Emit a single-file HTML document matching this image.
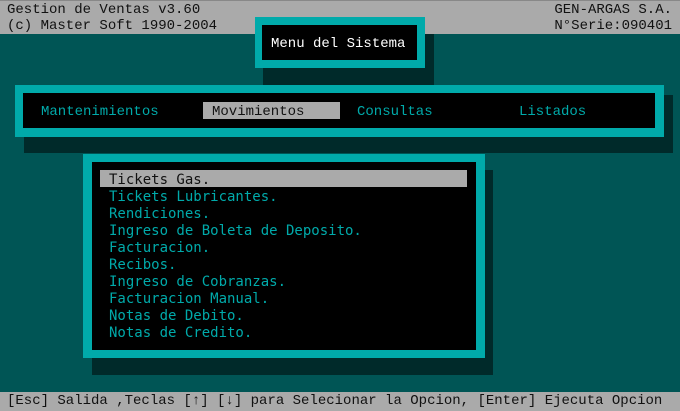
<!DOCTYPE html>
<html><head><style>
body{margin:0;width:680px;height:411px;background:#005555;position:relative;overflow:hidden;font-family:"Liberation Mono","DejaVu Sans Mono",monospace;font-size:14px;}
div{position:absolute;box-sizing:border-box;}
.t{white-space:pre;line-height:17px;}
</style></head><body>
<div style="left:0;top:0;width:680px;height:34px;background:#aaaaaa;border-top:1px solid #888;"></div>
<div class="t" style="left:7px;top:2px;color:#111;">Gestion de Ventas v3.60</div>
<div class="t" style="left:7px;top:18px;color:#111;">(c) Master Soft 1990-2004</div>
<div class="t" style="right:8px;top:2px;color:#111;">GEN-ARGAS S.A.</div>
<div class="t" style="right:8px;top:18px;color:#111;">N°Serie:090401</div>

<div style="left:263px;top:34px;width:171px;height:51px;background:#002a2a;"></div>
<div style="left:255px;top:17px;width:170px;height:51px;background:#00aaaa;"></div>
<div style="left:262px;top:25px;width:155px;height:35px;background:#000;"></div>
<div class="t" style="left:271px;top:36px;color:#fff;">Menu del Sistema</div>

<div style="left:24px;top:95px;width:649px;height:58px;background:#002a2a;"></div>
<div style="left:15px;top:85px;width:649px;height:52px;background:#00aaaa;"></div>
<div style="left:23px;top:93px;width:632px;height:35px;background:#000;"></div>
<div style="left:203px;top:102px;width:137px;height:17px;background:#aaaaaa;"></div>
<div class="t" style="left:41px;top:104px;color:#00aaaa;">Mantenimientos</div>
<div class="t" style="left:212px;top:104px;color:#111;">Movimientos</div>
<div class="t" style="left:357px;top:104px;color:#00aaaa;">Consultas</div>
<div class="t" style="left:519px;top:104px;color:#00aaaa;">Listados</div>

<div style="left:92px;top:170px;width:401px;height:205px;background:#002a2a;"></div>
<div style="left:83px;top:154px;width:402px;height:204px;background:#00aaaa;"></div>
<div style="left:92px;top:162px;width:384px;height:188px;background:#000;"></div>
<div style="left:100px;top:170px;width:367px;height:17px;background:#aaaaaa;"></div>
<div class="t" style="left:109px;top:172px;color:#00aaaa;font-family:'DejaVu Sans Mono',monospace;"><span style="color:#111">Tickets Gas.</span>
Tickets Lubricantes.
Rendiciones.
Ingreso de Boleta de Deposito.
Facturacion.
Recibos.
Ingreso de Cobranzas.
Facturacion Manual.
Notas de Debito.
Notas de Credito.</div>

<div style="left:0;top:392px;width:680px;height:19px;background:#aaaaaa;"></div>
<div class="t" style="left:7px;top:393px;color:#111;">[Esc] Salida ,Teclas [↑] [↓] para Selecionar la Opcion, [Enter] Ejecuta Opcion</div>
</body></html>
